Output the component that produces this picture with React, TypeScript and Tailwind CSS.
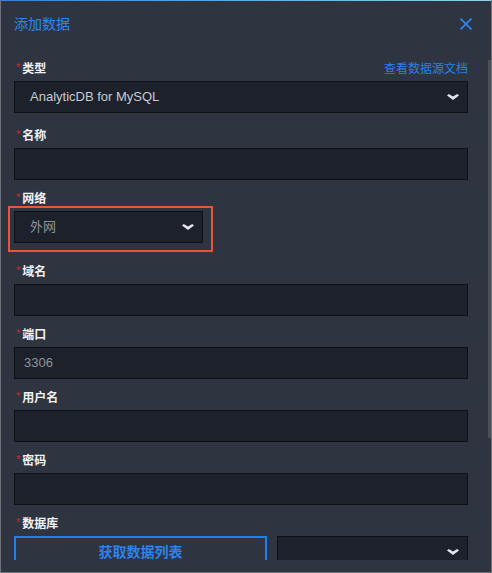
const FONT = `"Liberation Sans", "Noto Sans CJK SC", sans-serif`;

function Chevron() {
  return (
    <svg width="12" height="6" viewBox="0 0 12 6" className="shrink-0">
      <polygon points="0,1.6 1.8,0 6,2.4 10.2,0 12,1.6 6,6" fill="#e2e5ea" />
    </svg>
  );
}

function Label({ text, right }: { text: string; right?: React.ReactNode }) {
  return (
    <div className="mb-[2px] flex h-[20px] items-center justify-between pl-[2px]">
      <div className="flex items-center text-[12px] font-bold text-[#f1f2f4]">
        <span className="relative -top-[2px] mr-[2px] text-[11px] font-normal text-[#d02a2a]">*</span>
        {text}
      </div>
      {right}
    </div>
  );
}

function Input({ value }: { value?: string }) {
  return (
    <div className="flex h-[32px] items-center border border-[#0d1015] bg-[#1c212b] px-[9px] text-[13px] text-[#8f959c]">
      {value}
    </div>
  );
}

function Select({ value, light, className = "" }: { value?: string; light?: boolean; className?: string }) {
  return (
    <div
      className={`flex h-[32px] items-center justify-between border border-[#0d1015] bg-[#1c212b] pl-[15px] pr-[8px] text-[13px] ${
        light ? "text-[#c8ccd2]" : "text-[#8f959c]"
      } ${className}`}
    >
      <span>{value}</span>
      <Chevron />
    </div>
  );
}

export default function App() {
  return (
    <div
      className="relative flex h-[573px] w-[492px] flex-col overflow-hidden border-x border-b border-[#707379] bg-[#2f3540]"
      style={{ fontFamily: FONT }}
    >
      <div className="h-px shrink-0 bg-gradient-to-r from-[#3a80d8] to-[#8fd3ea]" />

      <div className="flex h-[46px] shrink-0 items-center justify-between pl-[13px] pr-[19px]">
        <h1 className="text-[14px] text-[#2d87f0]">添加数据</h1>
        <svg width="12" height="12" viewBox="0 0 12 12">
          <path d="M0.5 0.5 L11.5 11.5 M11.5 0.5 L0.5 11.5" stroke="#2d87f0" strokeWidth="1.6" />
        </svg>
      </div>

      <div className="min-h-0 flex-1 overflow-hidden pl-[13px] pr-[23px] pt-[12px]">
        <div className="mb-[13px]">
          <Label
            text="类型"
            right={<span className="text-[12px] text-[#2b7fe8]">查看数据源文档</span>}
          />
          <Select value="AnalyticDB for MySQL" light />
        </div>

        <div className="mb-[9px]">
          <Label text="名称" />
          <Input />
        </div>

        <div className="mb-[10px]">
          <Label text="网络" />
          <div className="-ml-[6px] -mt-[5px] w-fit border-2 border-[#e8553a] pb-[7px] pl-[4px] pr-[8px] pt-[3px]">
            <Select value="外网" className="w-[189px]" />
          </div>
        </div>

        <div className="mb-[9px]">
          <Label text="域名" />
          <Input />
        </div>

        <div className="mb-[9px]">
          <Label text="端口" />
          <Input value="3306" />
        </div>

        <div className="mb-[9px]">
          <Label text="用户名" />
          <Input />
        </div>

        <div className="mb-[9px]">
          <Label text="密码" />
          <Input />
        </div>

        <div>
          <Label text="数据库" />
          <div className="flex gap-[10px]">
            <button
              type="button"
              className="flex h-[32px] w-[253px] shrink-0 items-center justify-center border-2 border-[#1f7ff0] text-[14px] font-bold text-[#2b82f0]"
            >
              获取数据列表
            </button>
            <Select className="flex-1" />
          </div>
        </div>
      </div>

      <div className="h-[12px] shrink-0" />

      <div className="absolute right-0 top-[60px] h-[378px] w-[3px] bg-[#4b5059]" />
    </div>
  );
}
